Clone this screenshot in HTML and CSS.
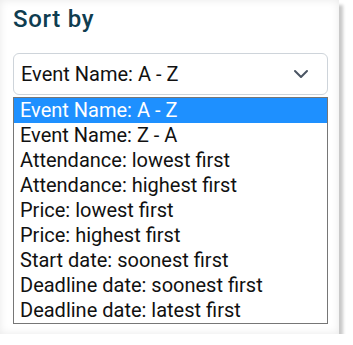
FILE: index.html
```html
<!DOCTYPE html>
<html lang="en">
<head>
    <meta charset="UTF-8">
    <meta name="viewport" content="width=device-width, initial-scale=1.0">
    <title>Sort by</title>
    <link rel="stylesheet" href="styles.css">
</head>
<body>
    <div class="card">
        <h2 class="sort-title">Sort by</h2>
        <div class="select-box">
            <span class="select-value">Event Name: A - Z</span>
            <svg class="chevron" width="16" height="10" viewBox="0 0 16 10">
                <path d="M2 2 L8 8 L14 2" fill="none" stroke="#4a5563" stroke-width="2" stroke-linecap="round" stroke-linejoin="round"/>
            </svg>
        </div>
        <ul class="options">
            <li class="option selected">Event Name: A - Z</li>
            <li class="option">Event Name: Z - A</li>
            <li class="option">Attendance: lowest first</li>
            <li class="option">Attendance: highest first</li>
            <li class="option">Price: lowest first</li>
            <li class="option">Price: highest first</li>
            <li class="option">Start date: soonest first</li>
            <li class="option">Deadline date: soonest first</li>
            <li class="option">Deadline date: latest first</li>
        </ul>
    </div>
</body>
</html>
```

FILE: styles.css
```css
* {
    margin: 0;
    padding: 0;
    box-sizing: border-box;
}

body {
    background: #fff;
    font-family: Roboto, "Liberation Sans", sans-serif;
}

.card {
    width: 339px;
    height: 334px;
    padding: 2px 11px 0 13px;
    background: #fff;
    box-shadow: 4px 5px 3px #c9c9c9, inset 0 0 8px rgba(0,0,0,0.09);
}

.sort-title {
    font-size: 24px;
    font-weight: 500;
    line-height: 34px;
    letter-spacing: 0.7px;
    color: #0f3d50;
}

.select-box {
    display: flex;
    align-items: center;
    justify-content: space-between;
    height: 42px;
    margin-top: 17px;
    padding: 0 18px 0 7px;
    border: 1px solid #ced4da;
    border-radius: 6px;
    background: #fff;
}

.select-value {
    font-size: 20px;
    color: #111;
}

.options {
    list-style: none;
    margin-top: 2px;
    border: 1px solid #767676;
    background: #fff;
}

.option {
    height: 25px;
    line-height: 25px;
    padding-left: 6px;
    font-size: 20px;
    color: #111;
}

.option.selected {
    background: #1e90ff;
    color: #fff;
}
```
